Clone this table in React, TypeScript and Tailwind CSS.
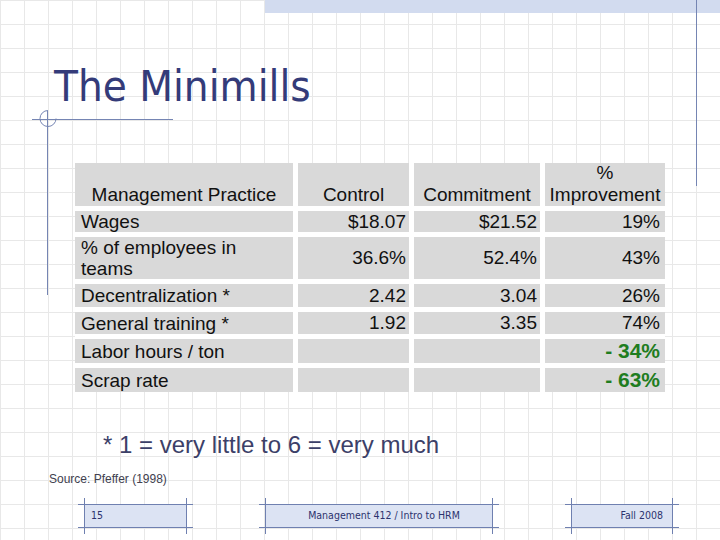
import React from 'react'

const rows = [
  { label: ['Wages'], control: '$18.07', commit: '$21.52', imp: '19%', h: 'h-[21px]' },
  { label: ['% of employees in', 'teams'], control: '36.6%', commit: '52.4%', imp: '43%', h: 'h-[42px]' },
  { label: ['Decentralization *'], control: '2.42', commit: '3.04', imp: '26%', h: 'h-[23px]' },
  { label: ['General training *'], control: '1.92', commit: '3.35', imp: '74%', h: 'h-[22px]' },
  { label: ['Labor hours / ton'], control: '', commit: '', imp: '- 34%', h: 'h-[24px]', green: true },
  { label: ['Scrap rate'], control: '', commit: '', imp: '- 63%', h: 'h-[24px]', green: true },
]

function Ornaments() {
  return (
    <svg className="absolute inset-0 pointer-events-none" width="720" height="540" viewBox="0 0 720 540">
      <g stroke="#7585b3" strokeWidth="1" fill="none">
        <line x1="32" y1="119.5" x2="173" y2="119.5" />
        <line x1="47.5" y1="111" x2="47.5" y2="295" />
        <path d="M48 110.5 A8 8 0 1 0 56 118.5" />
        <line x1="696.5" y1="0" x2="696.5" y2="186" />
      </g>
    </svg>
  )
}

function FooterBox({ w, ml, align, children }: { w: string; ml: string; align: string; children: React.ReactNode }) {
  return (
    <div className={`relative h-[24px] ${w} ${ml} bg-[#dce3f3] flex items-center ${align}`}>
      <div className="absolute top-0 -left-[6px] -right-[6px] h-px bg-[#6f80b0]" />
      <div className="absolute bottom-0 -left-[6px] -right-[6px] h-px bg-[#6f80b0]" />
      <div className="absolute left-0 -top-[6px] -bottom-[6px] w-px bg-[#6f80b0]" />
      <div className="absolute right-0 -top-[6px] -bottom-[6px] w-px bg-[#6f80b0]" />
      <span className="text-[10.5px] text-[#2c336e] font-['DejaVu_Sans_Condensed','DejaVu_Sans',sans-serif]">{children}</span>
    </div>
  )
}

export default function App() {
  return (
    <div className="relative w-[720px] h-[540px] overflow-hidden bg-white bg-[linear-gradient(to_right,#e8e8e8_1px,transparent_1px),linear-gradient(to_bottom,#e8e8e8_1px,transparent_1px)] bg-[size:24px_24px] font-['Liberation_Sans',Arial,sans-serif]">
      <Ornaments />

      {/* top strip */}
      <div className="flex justify-end">
        <div className="w-[455px] h-[13px] bg-[#d2dbef]" />
      </div>

      <h1 className="mt-[51px] ml-[54px] text-[43.5px] leading-[44px] text-[#343b79] font-['DejaVu_Sans_Condensed','DejaVu_Sans',sans-serif]">
        The Minimills
      </h1>

      {/* table */}
      <div className="mt-[55px] ml-[75px] w-[590px] bg-white grid grid-cols-[218px_111px_126px_120px] gap-x-[5px] gap-y-[5px] text-[19px] leading-[20px] text-[#111]">
        <div className="h-[43px] bg-[#d9d9d9] flex items-end justify-center leading-[22px]">Management Practice</div>
        <div className="h-[43px] bg-[#d9d9d9] flex items-end justify-center leading-[22px]">Control</div>
        <div className="h-[43px] bg-[#d9d9d9] flex items-end justify-center leading-[22px]">Commitment</div>
        <div className="h-[43px] bg-[#d9d9d9] flex flex-col items-center justify-end leading-[22px]">
          <span>%</span>
          <span>Improvement</span>
        </div>

        {rows.map((r) => (
          <React.Fragment key={r.label[0]}>
            <div className={`${r.h} bg-[#d9d9d9] flex flex-col justify-center pl-[6px] leading-[21px]`}>
              {r.label.map((l) => (
                <span key={l}>{l}</span>
              ))}
            </div>
            <div className={`${r.h} bg-[#d9d9d9] flex items-center justify-end pr-[3px]`}>{r.control}</div>
            <div className={`${r.h} bg-[#d9d9d9] flex items-center justify-end pr-[3px]`}>{r.commit}</div>
            <div
              className={`${r.h} bg-[#d9d9d9] flex items-center justify-end pr-[5px] ${
                r.green ? 'font-bold text-[21px] text-[#1f7d1f]' : ''
              }`}
            >
              {r.imp}
            </div>
          </React.Fragment>
        ))}
      </div>

      <p className="mt-[39px] ml-[103px] text-[24px] leading-[28px] text-[#3c4068]">
        * 1 = very little to 6 = very much
      </p>

      <p className="mt-[13px] ml-[49px] text-[12px] leading-[14px] text-[#41414f]">Source: Pfeffer (1998)</p>

      <div className="mt-[18px] flex">
        <FooterBox w="w-[103px]" ml="ml-[84px]" align="justify-start pl-[7px]">
          15
        </FooterBox>
        <FooterBox w="w-[228px]" ml="ml-[78px]" align="justify-center pl-[10px]">
          Management 412 / Intro to HRM
        </FooterBox>
        <FooterBox w="w-[102px]" ml="ml-[78px]" align="justify-end pr-[10px]">
          Fall 2008
        </FooterBox>
      </div>
    </div>
  )
}
